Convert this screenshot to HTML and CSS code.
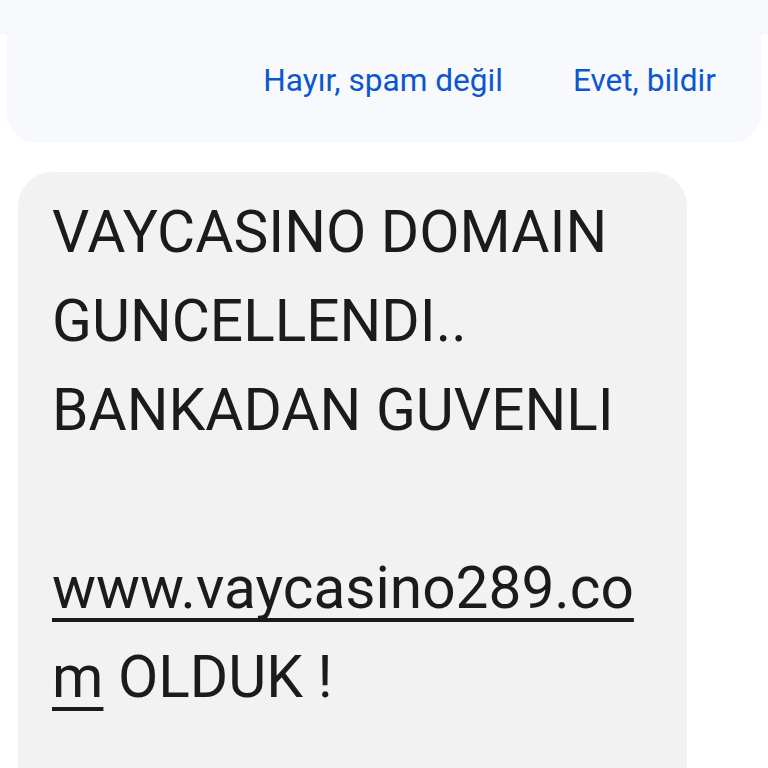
FILE: index.html
```html
<!DOCTYPE html>
<html lang="tr">
<head>
<meta charset="utf-8">
<link rel="stylesheet" href="styles.css">
</head>
<body>
<div class="topband"></div>
<div class="spam-card">
  <div class="actions">
    <span class="action">Hayır, spam değil</span>
    <span class="action">Evet, bildir</span>
  </div>
</div>
<div class="bubble">
  <p class="msg">VAYCASINO DOMAIN<br>GUNCELLENDI..<br>BANKADAN GUVENLI<br><br><a class="link">www.vaycasino289.co<br>m</a> OLDUK !</p>
</div>
</body>
</html>
```
FILE: styles.css
```css
html, body {
  margin: 0;
  padding: 0;
  background: #ffffff;
  overflow: hidden;
}
body {
  width: 768px;
  height: 768px;
  font-family: Roboto, "Noto Sans", sans-serif;
}
.topband {
  height: 35px;
  background: #f7f9fd;
}
.spam-card {
  margin: 0 7px;
  height: 108px;
  background: #f7f9fd;
  border-radius: 0 0 30px 30px;
  display: flex;
  align-items: flex-start;
  justify-content: flex-end;
}
.actions {
  display: flex;
  gap: 70px;
  padding: 27px 45px 0 0;
}
.action {
  color: #0b57d0;
  font-size: 31.6px;
}
.bubble {
  margin: 29px 0 0 18px;
  width: 669px;
  height: 596px;
  background: #f2f2f2;
  border-radius: 34px 34px 0 0;
  padding: 16px 0 0 34px;
  box-sizing: border-box;
}
.msg {
  margin: 0;
  font-size: 58.6px;
  line-height: 89px;
  color: #1b1b1b;
}
.link {
  color: #1b1b1b;
  text-decoration: underline;
  text-decoration-thickness: 4px;
  text-underline-offset: 10px;
  text-decoration-skip-ink: none;
}
```
